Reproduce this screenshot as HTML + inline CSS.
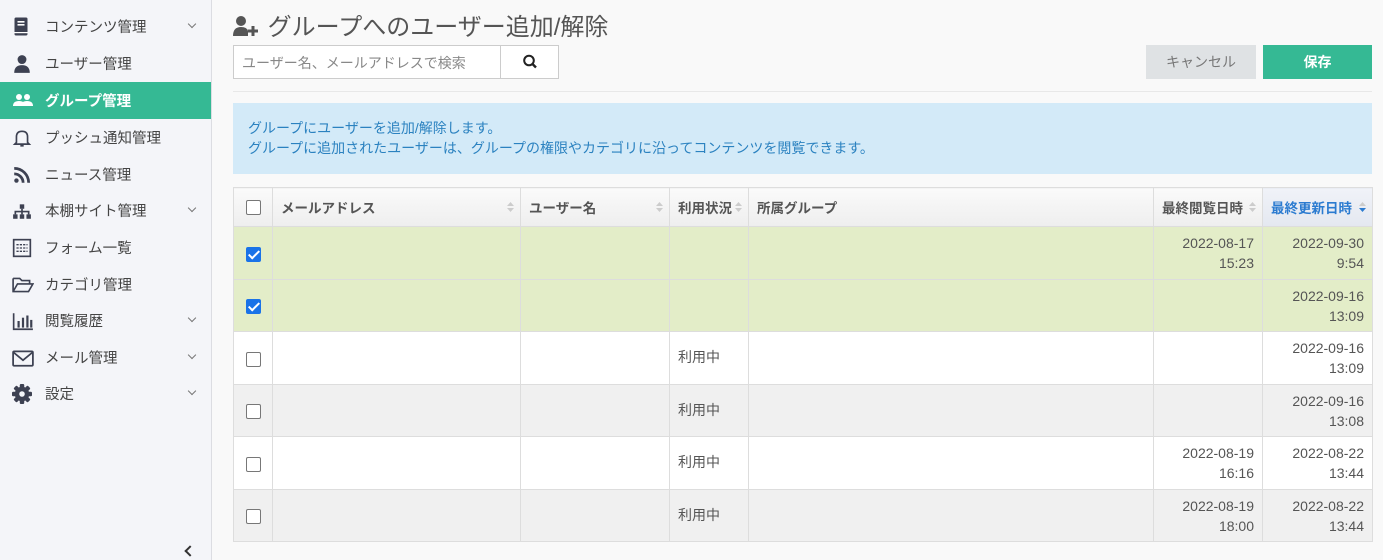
<!DOCTYPE html>
<html><head><meta charset="utf-8"><style>
*{box-sizing:border-box;margin:0;padding:0}
body{width:1383px;height:560px;overflow:hidden;background:#f9f9f9;font-family:"Liberation Sans","Noto Sans CJK JP",sans-serif;color:#444;font-size:14px;position:relative}
.sb{position:absolute;left:0;top:0;width:212px;height:560px;background:#f4f5f9;border-right:1px solid #dcdde2}
.it{position:absolute;left:0;width:211px;height:37px;display:flex;align-items:center;font-size:14.5px;color:#444}
.it svg{position:absolute;left:12px;top:9px}
.it span{position:absolute;left:45px}
.it .ch{position:absolute;left:189px;top:13px;width:6px;height:6px;border-right:1.3px solid #777;border-bottom:1.3px solid #777;transform:rotate(45deg)}
.it.act{background:#35b994;color:#fff;font-weight:bold}
.main{position:absolute;left:233px;top:0;width:1139px}
h1{position:absolute;left:0;top:7px;font-size:24px;font-weight:normal;color:#555;white-space:nowrap}
.search{position:absolute;left:0;top:45px;width:326px;height:34px;border:1px solid #ccc;background:#fff}
.search .ph{position:absolute;left:8px;top:7px;font-size:14px;color:#888}
.search .btn{position:absolute;left:266px;top:0;width:59px;height:32px;border-left:1px solid #ccc}
.cancel{position:absolute;left:913px;top:45px;width:110px;height:34px;background:#dfe2e4;color:#777;text-align:center;line-height:34px;font-size:14px}
.save{position:absolute;left:1030px;top:45px;width:109px;height:34px;background:#35b994;color:#fff;text-align:center;line-height:34px;font-size:14px;font-weight:bold}
.hr{position:absolute;left:0;top:91px;width:1139px;border-top:1px solid #e8e8e8}
.info{position:absolute;left:0;top:103px;width:1139px;height:71px;background:#d3eaf8;color:#2b82c0;font-size:14px;line-height:20px;padding:15px 0 0 15px}
table{position:absolute;left:0;top:187px;width:1139px;border-collapse:collapse;table-layout:fixed}
td,th{border:1px solid #ddd;font-size:14px}
th{height:39px;background:linear-gradient(#fafafa,#eeeeee);text-align:left;padding-left:8px;font-size:13.5px;color:#555;position:relative}
th .s{position:absolute;right:6px;top:13px;width:7px;height:12px}
td{height:52.5px;vertical-align:top;padding:6px 8px 0;line-height:20px;text-align:right;color:#555}
td.l{text-align:left;padding-top:15px}
td.c{text-align:center;vertical-align:middle;padding:0}
.cb{display:inline-block;width:15px;height:15px;border:1px solid #777;border-radius:2px;background:#fff;vertical-align:middle}
.cb.on{background:#1a73e8;border-color:#1a73e8;position:relative}
.cb.on:after{content:"";position:absolute;left:4px;top:0px;width:4px;height:9px;border-right:2px solid #fff;border-bottom:2px solid #fff;transform:rotate(45deg)}
tr.g td{background:#e3edc8}
tr.w td{background:#fff}
tr.z td{background:#f0f0f0}
.coll{position:absolute;left:186px;top:547px;width:8px;height:8px;border-left:2px solid #333;border-bottom:2px solid #333;transform:rotate(45deg)}
</style></head><body>
<div class="sb">
<div class="it" style="top:8px"><svg width="18" height="20" viewBox="0 0 18 20"><rect x="2.5" y="0.5" width="13" height="18" rx="1.5" fill="#3d4152"/><rect x="5.5" y="4" width="7" height="1.6" fill="#fff"/><rect x="5.5" y="7" width="7" height="1.6" fill="#fff"/><rect x="2.5" y="15" width="13" height="1.2" fill="#fff"/></svg><span>コンテンツ管理</span><i class="ch"></i></div>
<div class="it" style="top:45px"><svg width="20" height="20" viewBox="0 0 18 18"><circle cx="9" cy="5" r="4" fill="#3d4152"/><path d="M2 17 Q2 10 9 10 Q16 10 16 17Z" fill="#3d4152"/></svg><span>ユーザー管理</span></div>
<div class="it act" style="top:82px"><svg width="22" height="18" viewBox="0 0 22 18"><circle cx="7" cy="6" r="3" fill="#fff"/><circle cx="15" cy="6" r="3" fill="#fff"/><path d="M1 15 Q1 10 7 10 Q13 10 13 15Z M9 15 Q9 10 15 10 Q21 10 21 15Z" fill="#fff"/></svg><span>グループ管理</span></div>
<div class="it" style="top:119px"><svg width="20" height="20" viewBox="0 0 18 18"><path d="M4 13 V8 Q4 3 9 3 Q14 3 14 8 V13 L15.5 14.5 H2.5Z M7.5 16 H10.5" fill="none" stroke="#3d4152" stroke-width="1.5"/></svg><span>プッシュ通知管理</span></div>
<div class="it" style="top:156px"><svg width="20" height="20" viewBox="0 0 18 18"><circle cx="4" cy="14" r="2" fill="#3d4152"/><path d="M2 8 A8 8 0 0 1 10 16 M2 3 A13 13 0 0 1 15 16" fill="none" stroke="#3d4152" stroke-width="2.5"/></svg><span>ニュース管理</span></div>
<div class="it" style="top:192px"><svg width="20" height="20" viewBox="0 0 18 18"><rect x="7" y="3" width="4" height="4" fill="#3d4152"/><rect x="1" y="12" width="4" height="4" fill="#3d4152"/><rect x="7" y="12" width="4" height="4" fill="#3d4152"/><rect x="13" y="12" width="4" height="4" fill="#3d4152"/><path d="M9 7 V12 M3 12 V9.5 H15 V12" stroke="#3d4152" stroke-width="1.5" fill="none"/></svg><span>本棚サイト管理</span><i class="ch"></i></div>
<div class="it" style="top:229px"><svg width="20" height="20" viewBox="0 0 18 18"><rect x="1.5" y="1.5" width="15" height="15" fill="none" stroke="#3d4152" stroke-width="1.5"/><path d="M4 6 H14 M4 9 H14 M4 12 H14" stroke="#3d4152" stroke-width="1.2" stroke-dasharray="2 1"/></svg><span>フォーム一覧</span></div>
<div class="it" style="top:266px"><svg width="22" height="20" viewBox="0 0 20 18"><path d="M1 3 H7 L9 5 H16 V8 M1 3 V15 H15 L19 8 H5 L1 15" fill="none" stroke="#3d4152" stroke-width="1.5"/></svg><span>カテゴリ管理</span></div>
<div class="it" style="top:302px"><svg width="22" height="20" viewBox="0 0 20 18"><path d="M1.5 2 V16.5 H19" fill="none" stroke="#3d4152" stroke-width="1.5"/><rect x="5" y="9" width="2" height="6" fill="#3d4152"/><rect x="9" y="6" width="2" height="9" fill="#3d4152"/><rect x="13" y="4" width="2" height="11" fill="#3d4152"/><rect x="16.5" y="8" width="2" height="7" fill="#3d4152"/></svg><span>閲覧履歴</span><i class="ch"></i></div>
<div class="it" style="top:339px"><svg width="22" height="20" viewBox="0 0 20 18"><rect x="1" y="3" width="18" height="13" rx="1" fill="none" stroke="#3d4152" stroke-width="1.6"/><path d="M1.5 4 L10 11 L18.5 4" fill="none" stroke="#3d4152" stroke-width="1.6"/></svg><span>メール管理</span><i class="ch"></i></div>
<div class="it" style="top:375px"><svg width="20" height="20" viewBox="0 0 18 18"><g fill="#3d4152"><rect x="7" y="0" width="4" height="18" rx="1"/><rect x="7" y="0" width="4" height="18" rx="1" transform="rotate(45 9 9)"/><rect x="7" y="0" width="4" height="18" rx="1" transform="rotate(90 9 9)"/><rect x="7" y="0" width="4" height="18" rx="1" transform="rotate(135 9 9)"/><circle cx="9" cy="9" r="6.5"/></g><circle cx="9" cy="9" r="2.5" fill="#f4f5f9"/></svg><span>設定</span><i class="ch"></i></div>
<i class="coll"></i>
</div>
<div class="main">
<h1><svg width="28" height="22" viewBox="0 0 28 22" style="vertical-align:-2px"><circle cx="8" cy="6" r="5" fill="#555"/><path d="M0 21 Q0 12 8 12 Q14 12 15 16 V21Z" fill="#555"/><path d="M20 11 V21 M15 16 H25" stroke="#555" stroke-width="3"/></svg> グループへのユーザー追加/解除</h1>
<div class="search"><span class="ph">ユーザー名、メールアドレスで検索</span><div class="btn"><svg width="59" height="32" viewBox="0 0 59 32"><circle cx="28" cy="14.5" r="4.8" fill="none" stroke="#222" stroke-width="2"/><path d="M31.5 18 L35 21.5" stroke="#222" stroke-width="2.4"/></svg></div></div>
<div class="cancel">キャンセル</div>
<div class="save">保存</div>
<div class="hr"></div>
<div class="info">グループにユーザーを追加/解除します。<br>グループに追加されたユーザーは、グループの権限やカテゴリに沿ってコンテンツを閲覧できます。</div>
<table>
<colgroup><col style="width:39px"><col style="width:248px"><col style="width:149px"><col style="width:79px"><col style="width:405px"><col style="width:109px"><col style="width:110px"></colgroup>
<tr><th style="text-align:center;padding:0"><span class="cb"></span></th>
<th>メールアドレス<svg class="s" viewBox="0 0 7 12"><path d="M0 5 L3.5 1 L7 5Z M0 7 L3.5 11 L7 7Z" fill="#ccc"/></svg></th>
<th>ユーザー名<svg class="s" viewBox="0 0 7 12"><path d="M0 5 L3.5 1 L7 5Z M0 7 L3.5 11 L7 7Z" fill="#ccc"/></svg></th>
<th>利用状況<svg class="s" viewBox="0 0 7 12"><path d="M0 5 L3.5 1 L7 5Z M0 7 L3.5 11 L7 7Z" fill="#ccc"/></svg></th>
<th>所属グループ</th>
<th>最終閲覧日時<svg class="s" viewBox="0 0 7 12"><path d="M0 5 L3.5 1 L7 5Z M0 7 L3.5 11 L7 7Z" fill="#ccc"/></svg></th>
<th style="background:linear-gradient(#f0f2f8,#e4e8f0);color:#2b7bd0">最終更新日時<svg class="s" viewBox="0 0 7 12"><path d="M0 5 L3.5 1 L7 5Z" fill="#ccc"/><path d="M0 7 L3.5 11 L7 7Z" fill="#2b7bd0"/></svg></th></tr>
<tr class="g"><td class="c"><span class="cb on"></span></td><td></td><td></td><td></td><td></td><td>2022-08-17<br>15:23</td><td>2022-09-30<br>9:54</td></tr>
<tr class="g"><td class="c"><span class="cb on"></span></td><td></td><td></td><td></td><td></td><td></td><td>2022-09-16<br>13:09</td></tr>
<tr class="w"><td class="c"><span class="cb"></span></td><td></td><td></td><td class="l">利用中</td><td></td><td></td><td>2022-09-16<br>13:09</td></tr>
<tr class="z"><td class="c"><span class="cb"></span></td><td></td><td></td><td class="l">利用中</td><td></td><td></td><td>2022-09-16<br>13:08</td></tr>
<tr class="w"><td class="c"><span class="cb"></span></td><td></td><td></td><td class="l">利用中</td><td></td><td>2022-08-19<br>16:16</td><td>2022-08-22<br>13:44</td></tr>
<tr class="z"><td class="c"><span class="cb"></span></td><td></td><td></td><td class="l">利用中</td><td></td><td>2022-08-19<br>18:00</td><td>2022-08-22<br>13:44</td></tr>
</table>
</div>
</body></html>
